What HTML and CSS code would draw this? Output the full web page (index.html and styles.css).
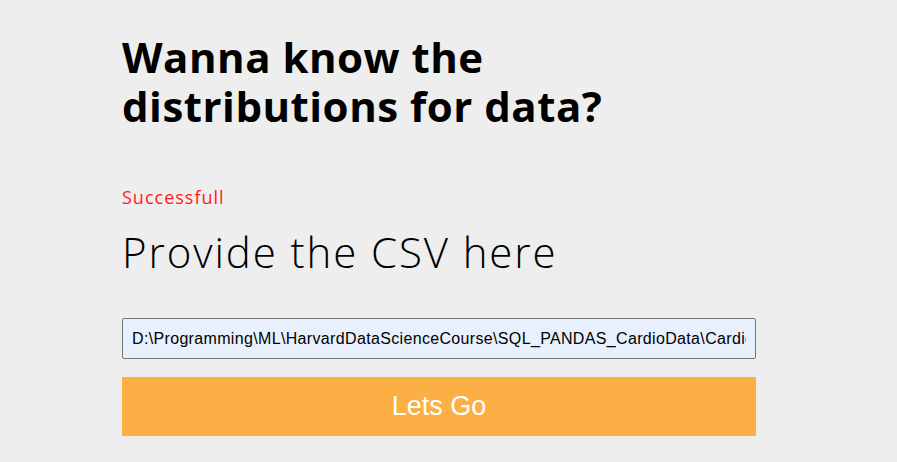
FILE: index.html
```html
<!DOCTYPE html>
<html lang="en">
<head>
<meta charset="utf-8">
<title>Distributions</title>
<link rel="stylesheet" href="styles.css">
</head>
<body>
<main class="page">
  <h1 class="title">Wanna know the<br>distributions for data?</h1>
  <p class="status">Successfull</p>
  <h2 class="subtitle">Provide the CSV here</h2>
  <form class="upload">
    <input class="path" type="text" value="D:\Programming\ML\HarvardDataScienceCourse\SQL_PANDAS_CardioData\Cardio.csv">
    <button class="go" type="button">Lets Go</button>
  </form>
</main>
</body>
</html>
```
FILE: styles.css
```css
html, body {
  margin: 0;
  padding: 0;
  background: #eeeeee;
}
.page {
  width: 634px;
  padding: 32px 0 0 122px;
  display: flex;
  flex-direction: column;
  font-family: "Open Sans", sans-serif;
}
.title {
  margin: 0;
  font-size: 42px;
  line-height: 49px;
  font-weight: 700;
  color: #000;
  letter-spacing: 0.5px;
}
.status {
  margin: 56px 0 0;
  font-size: 18px;
  line-height: 22px;
  color: #ff1a1a;
  letter-spacing: 1px;
}
.subtitle {
  margin: 20px 0 0;
  font-size: 42px;
  line-height: 48px;
  font-weight: 300;
  color: #000;
  letter-spacing: 1.9px;
}
.upload {
  display: flex;
  flex-direction: column;
  gap: 18px;
  margin-top: 42px;
}
.path {
  box-sizing: border-box;
  width: 634px;
  height: 41px;
  margin: 0;
  padding: 0 9px;
  border: 1px solid #767676;
  border-radius: 2px;
  background: #e8f0fe;
  font-family: "Liberation Sans", Arial, sans-serif;
  font-size: 16px;
  letter-spacing: 0.34px;
  color: #000;
}
.go {
  width: 634px;
  height: 59px;
  margin: 0;
  border: none;
  background: #fcaf45;
  color: #fff;
  font-family: "Liberation Sans", Arial, sans-serif;
  font-size: 27px;
}
```
